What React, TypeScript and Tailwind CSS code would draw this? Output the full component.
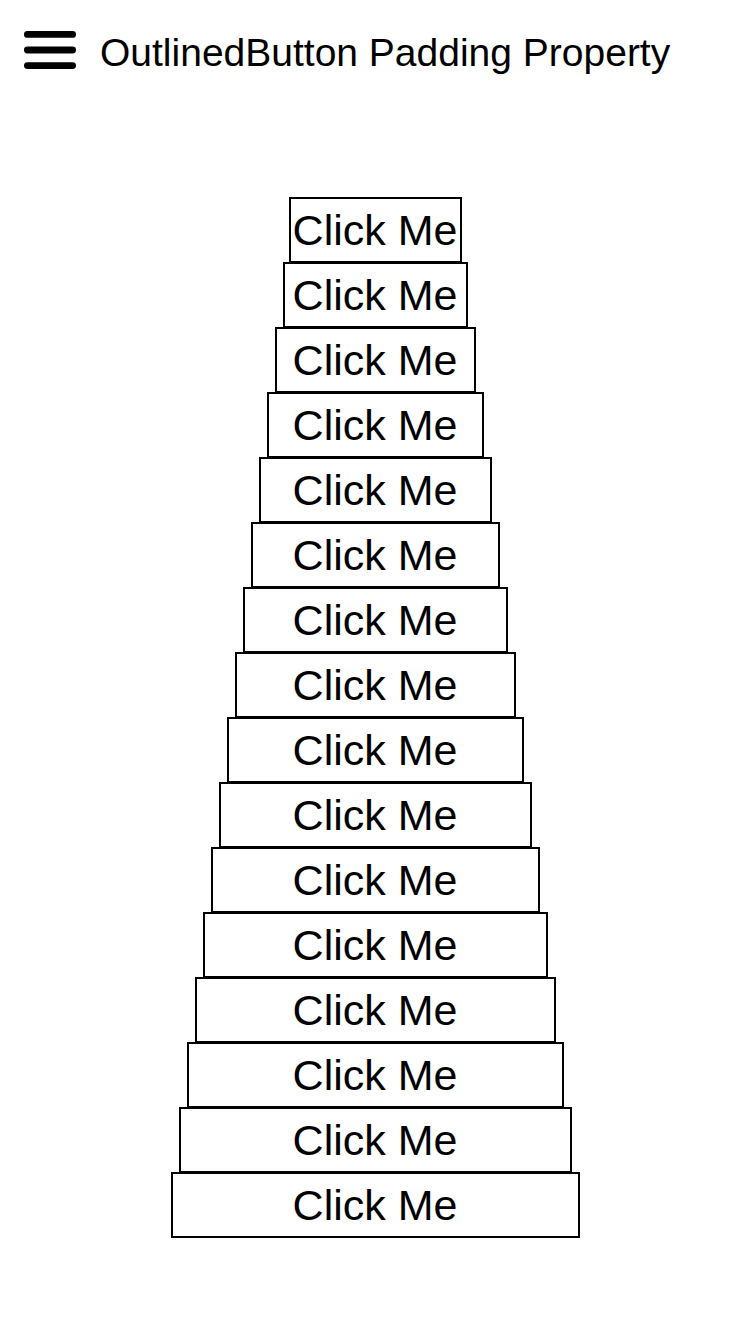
import { Fragment } from 'react';

const WIDTHS = Array.from({ length: 16 }, (_, i) => (i === 0 ? 173 : i === 1 ? 185 : 201 + 16 * (i - 2)));

function MenuIcon() {
  return (
    <svg width="52" height="38" viewBox="0 0 52 38" className="shrink-0">
      <rect x="0" y="0" width="52" height="6.8" rx="3.4" fill="#000" />
      <rect x="0" y="15.6" width="52" height="6.8" rx="3.4" fill="#000" />
      <rect x="0" y="31.2" width="52" height="6.8" rx="3.4" fill="#000" />
    </svg>
  );
}

export default function App() {
  return (
    <div className="w-[750px] min-h-[1334px] bg-white text-black font-['Liberation_Sans',Arial,sans-serif]">
      <header className="h-[100px] flex items-center pl-6 gap-6">
        <MenuIcon />
        <h1 className="text-[39px] leading-none font-normal pt-1">OutlinedButton Padding Property</h1>
      </header>

      <main className="pt-[97px] flex flex-col items-center">
        {WIDTHS.map((w, i) => (
          <Fragment key={i}>
            <button
              className={`h-[66px] border-2 border-black bg-white flex items-center justify-center text-[43px] leading-none text-black whitespace-nowrap ${
                i > 0 ? '-mt-px' : ''
              }`}
              style={{ width: w }}
            >
              Click Me
            </button>
          </Fragment>
        ))}
      </main>
    </div>
  );
}
